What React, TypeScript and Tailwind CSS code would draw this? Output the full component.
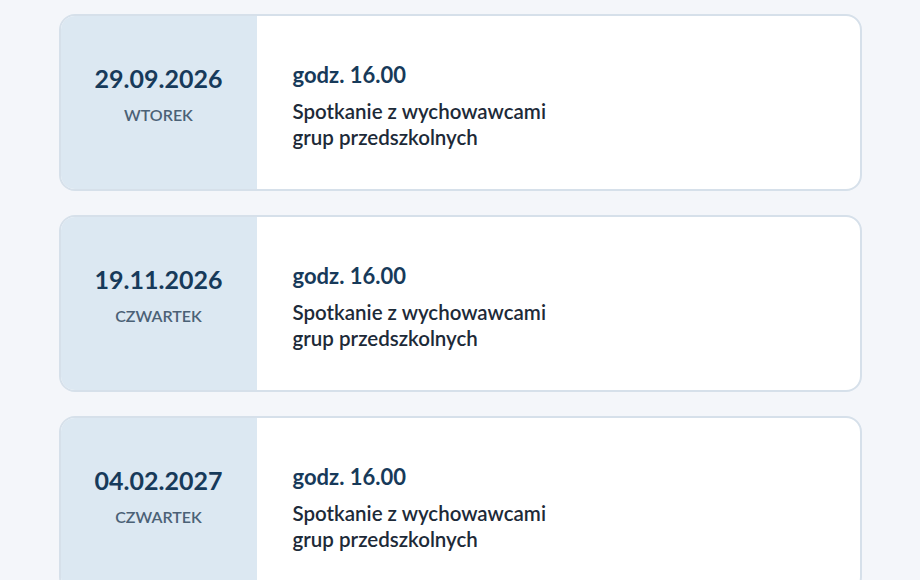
import React from "react";

type Meeting = {
  date: string;
  day: string;
  time: string;
  title: string[];
};

const meetings: Meeting[] = [
  { date: "29.09.2026", day: "WTOREK", time: "godz. 16.00", title: ["Spotkanie z wychowawcami", "grup przedszkolnych"] },
  { date: "19.11.2026", day: "CZWARTEK", time: "godz. 16.00", title: ["Spotkanie z wychowawcami", "grup przedszkolnych"] },
  { date: "04.02.2027", day: "CZWARTEK", time: "godz. 16.00", title: ["Spotkanie z wychowawcami", "grup przedszkolnych"] },
];

const MeetingCard: React.FC<{ meeting: Meeting }> = ({ meeting }) => (
  <div className="flex h-[177px] overflow-hidden rounded-2xl border-2 border-[#d6e0ea] bg-white">
    <div className="flex w-[196px] shrink-0 flex-col items-center bg-[#dce8f2] pt-[46px]">
      <div className="text-[25px] leading-8 font-bold text-[#173a5a]">{meeting.date}</div>
      <div className="mt-[11px] text-[16px] leading-5 font-semibold text-[#4b6176]">{meeting.day}</div>
    </div>
    <div className="flex flex-col pl-[36px] pt-[45px]">
      <div className="text-[22px] leading-7 font-bold text-[#173a5a]">{meeting.time}</div>
      <div className="mt-[9px] text-[20.5px] leading-[26px] font-semibold text-[#1d2a38]">
        {meeting.title.map((line) => (
          <div key={line}>{line}</div>
        ))}
      </div>
    </div>
  </div>
);

export default function App() {
  return (
    <div className="min-h-[580px] bg-[#f4f6fa] pt-[14px] font-['Lato',sans-serif]">
      <div className="mx-auto flex w-[803px] flex-col gap-6">
        {meetings.map((m) => (
          <MeetingCard key={m.date} meeting={m} />
        ))}
      </div>
    </div>
  );
}
